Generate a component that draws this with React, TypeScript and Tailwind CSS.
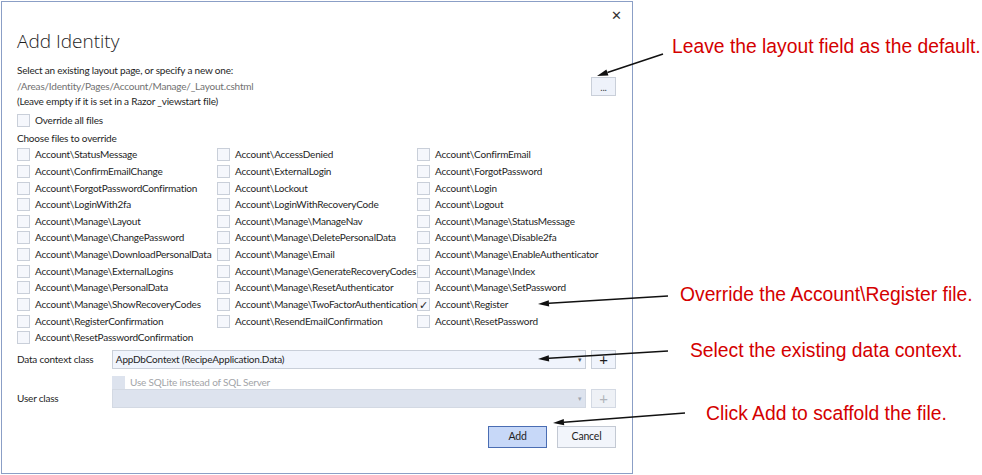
const rows: [string, string, string][] = [
  ["Account\\StatusMessage", "Account\\AccessDenied", "Account\\ConfirmEmail"],
  ["Account\\ConfirmEmailChange", "Account\\ExternalLogin", "Account\\ForgotPassword"],
  ["Account\\ForgotPasswordConfirmation", "Account\\Lockout", "Account\\Login"],
  ["Account\\LoginWith2fa", "Account\\LoginWithRecoveryCode", "Account\\Logout"],
  ["Account\\Manage\\Layout", "Account\\Manage\\ManageNav", "Account\\Manage\\StatusMessage"],
  ["Account\\Manage\\ChangePassword", "Account\\Manage\\DeletePersonalData", "Account\\Manage\\Disable2fa"],
  ["Account\\Manage\\DownloadPersonalData", "Account\\Manage\\Email", "Account\\Manage\\EnableAuthenticator"],
  ["Account\\Manage\\ExternalLogins", "Account\\Manage\\GenerateRecoveryCodes", "Account\\Manage\\Index"],
  ["Account\\Manage\\PersonalData", "Account\\Manage\\ResetAuthenticator", "Account\\Manage\\SetPassword"],
  ["Account\\Manage\\ShowRecoveryCodes", "Account\\Manage\\TwoFactorAuthentication", "Account\\Register"],
  ["Account\\RegisterConfirmation", "Account\\ResendEmailConfirmation", "Account\\ResetPassword"],
  ["Account\\ResetPasswordConfirmation", "", ""],
];

function Check({ label, checked, disabled }: { label: string; checked?: boolean; disabled?: boolean }) {
  return (
    <div className="flex items-center whitespace-nowrap">
      <span
        className={
          "flex h-[13px] w-[13px] shrink-0 items-center justify-center border text-[11px] leading-none tracking-normal text-[#1e1e1e] " +
          (disabled ? "border-[#dde3ee] bg-[#dde3ee]" : "border-[#c9cfd9] bg-[#f5f7fc]")
        }
      >
        {checked ? "✓" : null}
      </span>
      <span className={"ml-[5px] " + (disabled ? "text-[#a2a4a8]" : "text-[#1e1e1e]")}>{label}</span>
    </div>
  );
}

function Arrow({ x1, y1, x2, y2 }: { x1: number; y1: number; x2: number; y2: number }) {
  const a = Math.atan2(y2 - y1, x2 - x1);
  const len = 11;
  const w = 3.2;
  const bx = x2 - len * Math.cos(a);
  const by = y2 - len * Math.sin(a);
  const px = -Math.sin(a) * w;
  const py = Math.cos(a) * w;
  return (
    <g>
      <line x1={x1} y1={y1} x2={bx} y2={by} stroke="#111" strokeWidth={1.5} />
      <polygon points={`${x2},${y2} ${bx + px},${by + py} ${bx - px},${by - py}`} fill="#111" />
    </g>
  );
}

export default function App() {
  return (
    <div className="relative h-[475px] w-[982px] overflow-hidden bg-white font-['Lato',sans-serif] text-[10px] tracking-[-0.2px]">
      <div className="ml-px mt-px flex h-[473px] w-[632px] flex-col border border-[#8b9fc6] bg-white pl-[15px] pr-[16px]">
        <div className="-mr-[6px] flex h-[26px] items-start justify-end pt-[7px]">
          <span className="font-['Open_Sans',sans-serif] text-[13px] leading-none tracking-normal text-[#333]">✕</span>
        </div>
        <h1 className="font-['Open_Sans',sans-serif] text-[19px] font-light leading-[26px] tracking-normal text-[#1e1e1e]">
          Add Identity
        </h1>

        <div className="mt-[9px] flex items-start justify-between">
          <div className="leading-[15.5px] text-[#1e1e1e]">
            <div>Select an existing layout page, or specify a new one:</div>
            <div className="text-[#717171]">/Areas/Identity/Pages/Account/Manage/_Layout.cshtml</div>
            <div>(Leave empty if it is set in a Razor _viewstart file)</div>
          </div>
          <button className="mt-[14px] flex h-[19px] w-[25px] items-center justify-center border border-[#c9cfd9] bg-[#eef2fa] text-[10px] leading-none text-[#444]">
            ...
          </button>
        </div>

        <div className="mt-[3px] h-[17px]">
          <Check label="Override all files" />
        </div>
        <div className="leading-[17px] text-[#1e1e1e]">Choose files to override</div>

        <div className="grid grid-cols-[200px_200px_200px] auto-rows-[16.64px] items-center">
          {rows.flatMap((r, i) =>
            r.map((label, j) =>
              label ? (
                <Check key={i + "-" + j} label={label} checked={label === "Account\\Register"} />
              ) : (
                <div key={i + "-" + j} />
              )
            )
          )}
        </div>

        <div className="mt-[4px] flex items-center">
          <span className="w-[95px] text-[#1e1e1e]">Data context class</span>
          <div className="flex h-[19px] w-[475px] items-center justify-between border border-[#c9cfd9] bg-[#f0f4fc] pl-[3px] pr-[3px]">
            <span className="text-[#1e1e1e]">AppDbContext (RecipeApplication.Data)</span>
            <span className="text-[7px] leading-none text-[#555]">▾</span>
          </div>
          <button className="ml-[5px] flex h-[19px] w-[25px] items-center justify-center border border-[#c9cfd9] bg-[#f0f4fc] text-[15px] leading-none text-[#1e1e1e]">
            +
          </button>
        </div>

        <div className="mt-[6px] ml-[95px] h-[14px]">
          <Check label="Use SQLite instead of SQL Server" disabled />
        </div>

        <div className="flex items-center">
          <span className="w-[95px] text-[#1e1e1e]">User class</span>
          <div className="flex h-[19px] w-[475px] items-center justify-end border border-[#d3d9e3] bg-[#dde3ee] pr-[3px]">
            <span className="text-[7px] leading-none text-[#a0a6b0]">▾</span>
          </div>
          <button className="ml-[5px] flex h-[19px] w-[25px] items-center justify-center border border-[#d3d9e3] bg-[#eef1f6] text-[15px] leading-none text-[#b0b4ba]">
            +
          </button>
        </div>

        <div className="mt-[18px] flex justify-end gap-[10px]">
          <button className="flex h-[22px] w-[59px] items-center justify-center border border-[#4a6db3] bg-[#c7d8f8] text-[10.5px] text-[#1e1e1e]">
            Add
          </button>
          <button className="flex h-[22px] w-[59px] items-center justify-center border border-[#c3c9d3] bg-[#f2f5fb] text-[10.5px] text-[#1e1e1e]">
            Cancel
          </button>
        </div>
      </div>

      <div className="absolute left-[672px] top-[34px] whitespace-nowrap font-['Liberation_Sans',Arial,sans-serif] text-[19.3px] leading-[26px] tracking-normal text-[#d40000]">
        Leave the layout field as the default.
      </div>
      <div className="absolute left-[680px] top-[282px] whitespace-nowrap font-['Liberation_Sans',Arial,sans-serif] text-[19.3px] leading-[26px] tracking-normal text-[#d40000]">
        Override the Account\Register file.
      </div>
      <div className="absolute left-[690px] top-[338px] whitespace-nowrap font-['Liberation_Sans',Arial,sans-serif] text-[19.3px] leading-[26px] tracking-normal text-[#d40000]">
        Select the existing data context.
      </div>
      <div className="absolute left-[706px] top-[401px] whitespace-nowrap font-['Liberation_Sans',Arial,sans-serif] text-[19.3px] leading-[26px] tracking-normal text-[#d40000]">
        Click Add to scaffold the file.
      </div>

      <svg className="pointer-events-none absolute inset-0" width={982} height={475}>
        <Arrow x1={663} y1={54} x2={597} y2={76} />
        <Arrow x1={668} y1={296} x2={538} y2={304} />
        <Arrow x1={668} y1={351} x2={538} y2={359} />
        <Arrow x1={685} y1={413} x2={553} y2={423} />
      </svg>
    </div>
  );
}
